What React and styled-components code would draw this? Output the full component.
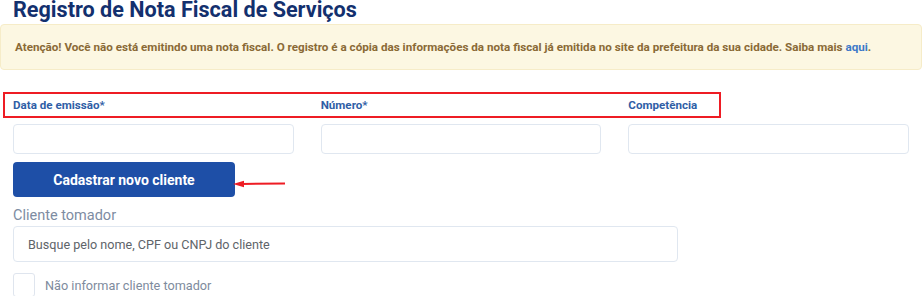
import React from "react";
import styled, { createGlobalStyle } from "styled-components";

const Global = createGlobalStyle`
  html, body { margin: 0; padding: 0; background: #fff; }
  body { font-family: Roboto, "Noto Sans", Arial, sans-serif; }
  * { box-sizing: border-box; }
`;

const Page = styled.div`
  position: relative;
  width: 923px;
  height: 296px;
  overflow: hidden;
`;

const Title = styled.h1`
  margin: 0 0 0 13px;
  height: 24px;
  font-size: 21.6px;
  line-height: 20px;
  font-weight: 700;
  color: #13306e;
`;

const Alert = styled.div`
  height: 46px;
  margin: 0 1px 0 0;
  display: flex;
  align-items: center;
  padding: 0 14px;
  background: #fcf7e2;
  border: 1px solid #f6ecc8;
  border-radius: 4px;
  font-size: 11.65px;
  font-weight: 700;
  color: #8a6a36;
  a { color: #3d79c8; text-decoration: none; }
`;

const Form = styled.div`
  padding: 22px 14px 0 13px;
  display: flex;
  flex-direction: column;
`;

const Fields = styled.div`
  position: relative;
  display: grid;
  grid-template-columns: repeat(3, 1fr);
  column-gap: 27px;
  row-gap: 6px;
`;

const Label = styled.label`
  height: 26px;
  display: flex;
  align-items: center;
  font-size: 11.6px;
  font-weight: 700;
  color: #2f5ea6;
`;

const Input = styled.div`
  height: 30px;
  border: 1px solid #e0e7f0;
  border-radius: 4px;
  background: #fff;
`;

const Highlight = styled.div`
  position: absolute;
  left: -10px;
  top: 0;
  width: 718px;
  height: 26px;
  border: 2px solid #ee1c24;
  pointer-events: none;
`;

const ButtonRow = styled.div`
  position: relative;
  margin-top: 8px;
  display: flex;
`;

const Button = styled.button`
  width: 222px;
  height: 35px;
  border: none;
  border-radius: 4px;
  background: #1e4fa7;
  color: #fff;
  font-family: Roboto, Arial, sans-serif;
  font-size: 14px;
  font-weight: 700;
  padding: 0;
`;

const Arrow = styled.svg`
  position: absolute;
  left: 205px;
  top: 17px;
`;

const SectionLabel = styled.div`
  margin-top: 8px;
  height: 20px;
  display: flex;
  align-items: center;
  font-size: 14.5px;
  color: #7d8ca2;
`;

const Search = styled.div`
  margin-top: 1px;
  width: 665px;
  height: 36px;
  display: flex;
  align-items: center;
  padding-left: 14px;
  border: 1px solid #e0e7f0;
  border-radius: 4px;
  font-size: 12.6px;
  color: #606469;
`;

const CheckRow = styled.div`
  margin-top: 11px;
  display: flex;
  align-items: center;
  gap: 10px;
  font-size: 12.7px;
  color: #7e8b9d;
`;

const Box = styled.span`
  width: 22px;
  height: 24px;
  border: 1px solid #dfe5ee;
  border-radius: 3px;
  flex: none;
`;

export default function App() {
  return (
    <Page>
      <Global />
      <Title>Registro de Nota Fiscal de Serviços</Title>
      <Alert>
        <span>
          Atenção! Você não está emitindo uma nota fiscal. O registro é a cópia das informações da nota fiscal já emitida no site da prefeitura da sua cidade. Saiba mais <a href="#">aqui</a>.
        </span>
      </Alert>
      <Form>
        <Fields>
          <Label>Data de emissão*</Label>
          <Label>Número*</Label>
          <Label>Competência</Label>
          <Input />
          <Input />
          <Input />
          <Highlight />
        </Fields>
        <ButtonRow>
          <Button>Cadastrar novo cliente</Button>
          <Arrow width="70" height="10" viewBox="0 0 70 10">
            <line x1="24" y1="5" x2="67" y2="4.5" stroke="#ee1c24" strokeWidth="2" />
            <polygon points="15,5 26,1.8 26,8.2" fill="#ee1c24" />
          </Arrow>
        </ButtonRow>
        <SectionLabel>Cliente tomador</SectionLabel>
        <Search>Busque pelo nome, CPF ou CNPJ do cliente</Search>
        <CheckRow>
          <Box />
          <span>Não informar cliente tomador</span>
        </CheckRow>
      </Form>
    </Page>
  );
}
